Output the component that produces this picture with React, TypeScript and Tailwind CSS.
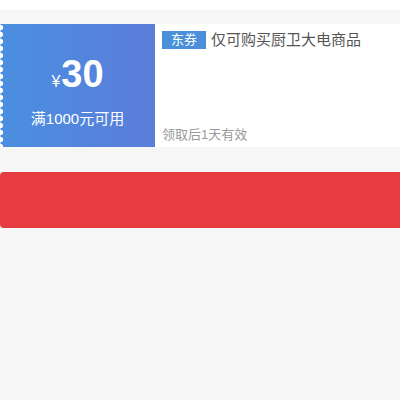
export default function App() {
  return (
    <div className="min-h-[400px] bg-[#f6f6f6] font-['Liberation_Sans','Noto_Sans_CJK_SC',sans-serif]">
      <div className="h-[10px] bg-white" />
      <div className="pt-[14px]">
        {/* Coupon card */}
        <div className="flex h-[123px] bg-white">
          <div className="flex w-[155px] shrink-0 flex-col items-center justify-center bg-[image:radial-gradient(circle_at_0_3.5px,#fff_2.8px,transparent_3.3px),linear-gradient(to_right,#4a8fe0,#5b7dda)] bg-[length:7px_7px,100%_100%] bg-repeat-y pt-[10px] text-white">
            <div className="flex items-baseline">
              <span className="mr-[1px] text-[16px]">¥</span>
              <span className="text-[38px] font-bold leading-none">30</span>
            </div>
            <p className="mt-[17px] text-[15px] leading-none">满1000元可用</p>
          </div>
          <div className="flex flex-1 flex-col justify-between px-[7px] pt-[7px] pb-[6px]">
            <div className="flex items-center">
              <span className="bg-[#4a8fd9] px-[9px] text-[13px] leading-[18px] text-white">东券</span>
              <span className="ml-[5px] text-[15px] leading-[18px] text-[#555]">仅可购买厨卫大电商品</span>
            </div>
            <p className="text-[13px] leading-none text-[#999]">领取后1天有效</p>
          </div>
        </div>
        {/* Action bar */}
        <div className="mt-[25px] -mr-[10px] h-[56px] rounded-[4px] bg-[#e63b3f]" />
      </div>
    </div>
  );
}
